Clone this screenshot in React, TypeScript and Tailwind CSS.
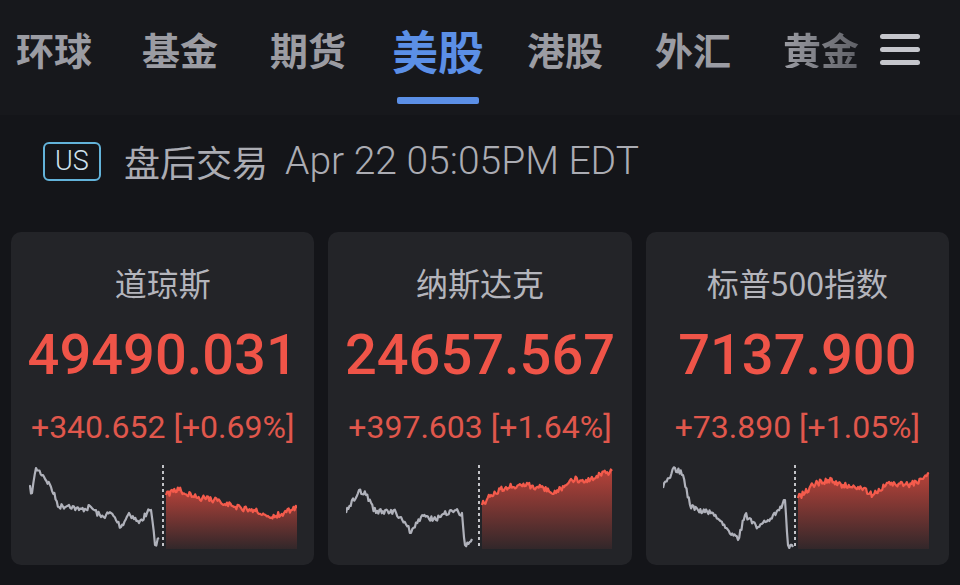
import React from "react";

type Pt = [number, number];

const CJK = { fontFamily: '"Noto Sans CJK SC", "Noto Sans", sans-serif' };
const NUM = { fontFamily: 'Roboto, "Noto Sans CJK SC", sans-serif' };

// label + left margin so the tabs land where the screenshot has them
const tabs: [string, string][] = [
  ["环球", "ml-0"],
  ["基金", "ml-[50px]"],
  ["期货", "ml-[52px]"],
  ["美股", "ml-[46px]"],
  ["港股", "ml-[43px]"],
  ["外汇", "ml-[52px]"],
  ["黄金", "ml-[52px]"],
];

const indices = [
  {
    name: "道琼斯",
    price: "49490.031",
    change: "+340.652 [+0.69%]",
    seed: 7,
    split: 134,
    gray: [[0, 22], [3, 28], [7, 3], [14, 10], [22, 22], [30, 42], [40, 40], [50, 45], [62, 42], [72, 52], [82, 48], [92, 62], [100, 48], [110, 58], [118, 48], [122, 45], [126, 80], [130, 73]] as Pt[],
    red: [[137, 30], [150, 25], [165, 32], [185, 35], [205, 42], [225, 45], [240, 52], [255, 48], [268, 43]] as Pt[],
  },
  {
    name: "纳斯达克",
    price: "24657.567",
    change: "+397.603 [+1.64%]",
    seed: 19,
    split: 133,
    gray: [[0, 48], [13, 25], [20, 30], [30, 48], [45, 45], [55, 52], [65, 68], [75, 52], [90, 55], [105, 45], [116, 48], [119, 80], [126, 74]] as Pt[],
    red: [[136, 40], [145, 30], [160, 22], [175, 20], [195, 22], [210, 28], [225, 14], [240, 15], [260, 8], [266, 6]] as Pt[],
  },
  {
    name: "标普500指数",
    price: "7137.900",
    change: "+73.890 [+1.05%]",
    seed: 31,
    split: 132,
    gray: [[0, 23], [12, 3], [20, 10], [27, 40], [35, 45], [50, 48], [60, 60], [75, 75], [82, 50], [95, 62], [105, 55], [115, 45], [122, 35], [125, 80], [130, 82]] as Pt[],
    red: [[135, 33], [150, 20], [165, 15], [180, 20], [195, 22], [210, 30], [225, 18], [245, 20], [260, 14], [266, 8]] as Pt[],
  },
];

function rng(seed: number) {
  let s = seed;
  return () => {
    s = (s * 16807) % 2147483647;
    return (s - 1) / 2147483646;
  };
}

function noisy(way: Pt[], seed: number): Pt[] {
  const r = rng(seed);
  const out: Pt[] = [];
  for (let i = 0; i < way.length - 1; i++) {
    const [x0, y0] = way[i];
    const [x1, y1] = way[i + 1];
    const steps = Math.max(1, Math.round((x1 - x0) / 1.2));
    for (let k = 0; k < steps; k++) {
      const t = k / steps;
      const jitter = k === 0 ? 0 : (r() - 0.5) * 6;
      out.push([x0 + (x1 - x0) * t, Math.min(83, Math.max(1, y0 + (y1 - y0) * t + jitter))]);
    }
  }
  out.push(way[way.length - 1]);
  return out;
}

function Spark({ gray, red, split, seed }: { gray: Pt[]; red: Pt[]; split: number; seed: number }) {
  const g = noisy(gray, seed);
  const rd = noisy(red, seed + 100);
  const line = (p: Pt[]) => p.map(([x, y]) => `${x.toFixed(1)},${y.toFixed(1)}`).join(" ");
  const area = `M${rd[0][0]},84 L` + rd.map(([x, y]) => `${x.toFixed(1)},${y.toFixed(1)}`).join(" L") + ` L${rd[rd.length - 1][0]},84 Z`;
  const gid = `fill${seed}`;
  return (
    <svg width="268" height="84" viewBox="0 0 268 84" className="block">
      <defs>
        <linearGradient id={gid} x1="0" y1="0" x2="0" y2="1">
          <stop offset="0%" stopColor="#dc4a3e" stopOpacity="0.8" />
          <stop offset="100%" stopColor="#dc4a3e" stopOpacity="0.08" />
        </linearGradient>
      </defs>
      <path d={area} fill={`url(#${gid})`} />
      <polyline points={line(rd)} fill="none" stroke="#f45b4c" strokeWidth="2.2" strokeLinejoin="round" />
      <polyline points={line(g)} fill="none" stroke="#b0b2bb" strokeWidth="2.2" strokeLinejoin="round" />
      <line x1={split} y1="0" x2={split} y2="84" stroke="#d4d5da" strokeWidth="1.8" strokeDasharray="3 3" />
    </svg>
  );
}

export default function App() {
  return (
    <div className="w-[960px] h-[585px] bg-[#141519] overflow-hidden">
      {/* top tabs */}
      <div className="h-[115px] bg-[#17181c] flex items-start pt-[26px] pl-[16px]">
        <div className="flex items-start">
          {tabs.map(([t, ml]) => {
            const active = t === "美股";
            return (
              <div key={t} className={`flex flex-col items-center ${ml}`}>
                <div className="h-[46px] flex items-center">
                  {active ? (
                    <span className="text-[46px] leading-none font-bold text-[#5b8fe6]" style={CJK}>{t}</span>
                  ) : t === "黄金" ? (
                    <span className="text-[38px] leading-none font-bold bg-gradient-to-r from-[#9b9ca3] to-[#5f6066] bg-clip-text text-transparent" style={CJK}>{t}</span>
                  ) : (
                    <span className="text-[38px] leading-none font-bold text-[#9b9ca3]" style={CJK}>{t}</span>
                  )}
                </div>
                {active && <div className="mt-[25px] w-[82px] h-[7px] rounded-[2px] bg-[#5b8fe6]" />}
              </div>
            );
          })}
        </div>
        <div className="ml-[21px] h-[46px] flex flex-col justify-center gap-[8px]">
          <div className="w-[40px] h-[5px] rounded-full bg-[#c5c6cc]" />
          <div className="w-[40px] h-[5px] rounded-full bg-[#c5c6cc]" />
          <div className="w-[40px] h-[5px] rounded-full bg-[#c5c6cc]" />
        </div>
      </div>

      {/* session row */}
      <div className="h-[92px] flex items-center pl-[43px]">
        <div className="w-[58px] h-[39px] border-2 border-[#63b3da] rounded-[6px] flex items-center justify-center text-[27px] leading-none font-light text-[#cfe2ee]" style={NUM}>
          US
        </div>
        <span className="ml-[23px] text-[36px] leading-none text-[#abacb3]" style={CJK}>盘后交易</span>
        <span className="ml-[17px] text-[39px] leading-none font-light text-[#abacb3]" style={NUM}>Apr 22 05:05PM EDT</span>
      </div>

      {/* index cards */}
      <div className="mt-[25px] px-[11px] grid grid-cols-3 gap-[14px]">
        {indices.map((c) => (
          <div key={c.name} className="h-[333px] rounded-[10px] bg-[#232428] flex flex-col items-center">
            <div className="mt-[32px] h-[36px] text-[32px] leading-[36px] text-[#b4b5bc]" style={CJK}>{c.name}</div>
            <div className="mt-[27px] h-[56px] text-[56px] leading-[56px] font-medium text-[#ef5448]" style={NUM}>{c.price}</div>
            <div className="mt-[28px] h-[32px] text-[32px] leading-[32px] text-[#e0574c]" style={NUM}>{c.change}</div>
            <div className="mt-[22px]">
              <Spark gray={c.gray} red={c.red} split={c.split} seed={c.seed} />
            </div>
          </div>
        ))}
      </div>
    </div>
  );
}
